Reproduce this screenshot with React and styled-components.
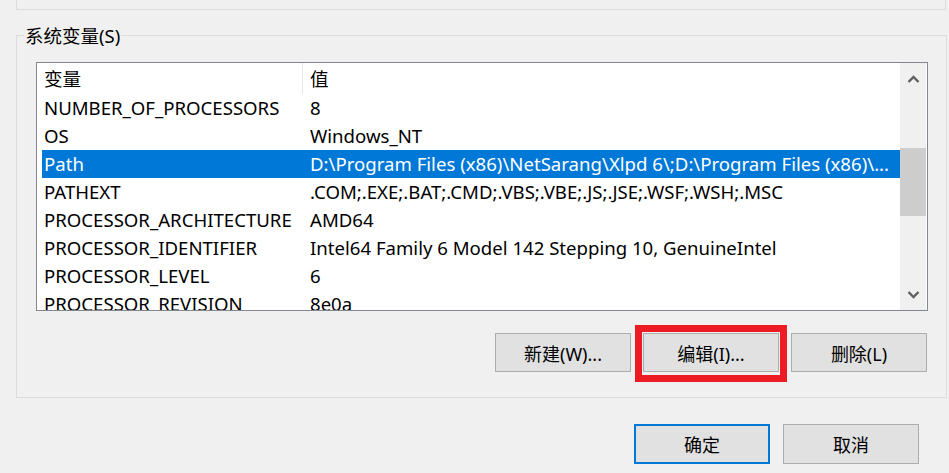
import React from "react";
import styled, { createGlobalStyle } from "styled-components";

const Global = createGlobalStyle`
  *, *::before, *::after { box-sizing: border-box; }
  html, body { margin: 0; padding: 0; background: #f0f0f0; }
  body {
    font-family: "Noto Sans", "Noto Sans CJK SC", sans-serif;
    font-size: 18px;
    color: #000;
  }
`;

const Page = styled.div`
  width: 949px;
  height: 473px;
  overflow: hidden;
  background: #f0f0f0;
  padding-left: 16px;
  display: flex;
  flex-direction: column;
`;

const TopGroup = styled.div`
  width: 930px;
  height: 10px;
  border: 1px solid #dcdcdc;
  border-top: none;
`;

const Group = styled.div`
  margin-top: 25px;
  width: 931px;
  border: 1px solid #dcdcdc;
  padding: 0 19px 25px 19px;
  display: flex;
  flex-direction: column;
`;

const Legend = styled.div`
  align-self: flex-start;
  margin: -12px 0 0 -12px;
  padding: 0 1px;
  height: 24px;
  line-height: 24px;
  background: #f0f0f0;
  font-size: 18.5px;
`;

const ListBox = styled.div`
  margin-top: 14px;
  width: 892px;
  height: 249px;
  border: 1px solid #828790;
  background: #fff;
  display: flex;
  font-size: 18.6px;
`;

const ListContent = styled.div`
  flex: 1;
  min-width: 0;
  overflow: hidden;
  display: flex;
  flex-direction: column;
`;

const Header = styled.div`
  height: 31px;
  flex: none;
  display: flex;
`;

const HeaderCell = styled.div`
  width: ${(p) => (p.$w ? `${p.$w}px` : "auto")};
  flex: ${(p) => (p.$w ? "none" : "1")};
  padding-left: 7px;
  line-height: 31px;
  border-right: ${(p) => (p.$w ? "1px solid #e5e5e5" : "none")};
  white-space: nowrap;
`;

const Row = styled.div`
  height: 28px;
  flex: none;
  margin-left: 5px;
  display: flex;
  align-items: center;
  background: ${(p) => (p.$selected ? "#0078d7" : "transparent")};
  color: ${(p) => (p.$selected ? "#fff" : "#000")};
`;

const Cell = styled.div`
  width: ${(p) => (p.$w ? `${p.$w}px` : "auto")};
  flex: ${(p) => (p.$w ? "none" : "1")};
  min-width: 0;
  padding-left: 2px;
  white-space: nowrap;
  overflow: hidden;
  line-height: 28px;
`;

const ScrollBar = styled.div`
  width: 26px;
  margin-right: 1px;
  flex: none;
  background: #f0f0f0;
  display: flex;
  flex-direction: column;
`;

const Arrow = styled.div`
  height: ${(p) => p.$h}px;
  flex: none;
  display: flex;
  align-items: center;
  justify-content: center;
`;

const Track = styled.div`
  flex: 1;
  padding-top: 53px;
`;

const Thumb = styled.div`
  height: 68px;
  background: #cdcdcd;
`;

const ButtonRow = styled.div`
  margin-top: 22px;
  display: flex;
  justify-content: flex-end;
  gap: 12px;
`;

const Button = styled.button`
  width: 136px;
  height: ${(p) => p.$h || 39}px;
  background: #e1e1e1;
  border: ${(p) => (p.$default ? "2px solid #0078d7" : "1px solid #adadad")};
  font-family: "Noto Sans", "Noto Sans CJK SC", sans-serif;
  font-size: 18px;
  color: #000;
  padding: 0;
  margin: 0;
  display: flex;
  align-items: center;
  justify-content: center;
`;

const Marked = styled.div`
  position: relative;
  display: flex;
  &::after {
    content: "";
    position: absolute;
    top: -8px;
    left: -8px;
    right: -8px;
    bottom: -10px;
    border: 7px solid #ed1c24;
    pointer-events: none;
  }
`;

const DialogButtons = styled.div`
  margin-top: 26px;
  padding-right: 30px;
  display: flex;
  justify-content: flex-end;
  gap: 13px;
`;

const rows = [
  ["NUMBER_OF_PROCESSORS", "8"],
  ["OS", "Windows_NT"],
  ["Path", "D:\\Program Files (x86)\\NetSarang\\Xlpd 6\\;D:\\Program Files (x86)\\...", true],
  ["PATHEXT", ".COM;.EXE;.BAT;.CMD;.VBS;.VBE;.JS;.JSE;.WSF;.WSH;.MSC"],
  ["PROCESSOR_ARCHITECTURE", "AMD64"],
  ["PROCESSOR_IDENTIFIER", "Intel64 Family 6 Model 142 Stepping 10, GenuineIntel"],
  ["PROCESSOR_LEVEL", "6"],
  ["PROCESSOR_REVISION", "8e0a"],
];

const Chevron = ({ up }) => (
  <svg width="13" height="8" viewBox="0 0 13 8">
    <path
      d={up ? "M1.5 7 L6.5 2 L11.5 7" : "M1.5 1 L6.5 6 L11.5 1"}
      fill="none"
      stroke="#606060"
      strokeWidth="2.4"
    />
  </svg>
);

export default function App() {
  return (
    <>
      <Global />
      <Page>
        <TopGroup />
        <Group>
          <Legend>系统变量(S)</Legend>
          <ListBox>
            <ListContent>
              <Header>
                <HeaderCell $w={266}>变量</HeaderCell>
                <HeaderCell>值</HeaderCell>
              </Header>
              {rows.map(([k, v, sel]) => (
                <Row key={k} $selected={sel}>
                  <Cell $w={266}>{k}</Cell>
                  <Cell>{v}</Cell>
                </Row>
              ))}
            </ListContent>
            <ScrollBar>
              <Arrow $h={32}>
                <Chevron up />
              </Arrow>
              <Track>
                <Thumb />
              </Track>
              <Arrow $h={30}>
                <Chevron />
              </Arrow>
            </ScrollBar>
          </ListBox>
          <ButtonRow>
            <Button>新建(W)...</Button>
            <Marked>
              <Button>编辑(I)...</Button>
            </Marked>
            <Button>删除(L)</Button>
          </ButtonRow>
        </Group>
        <DialogButtons>
          <Button $default $h={40}>确定</Button>
          <Button $h={40}>取消</Button>
        </DialogButtons>
      </Page>
    </>
  );
}
